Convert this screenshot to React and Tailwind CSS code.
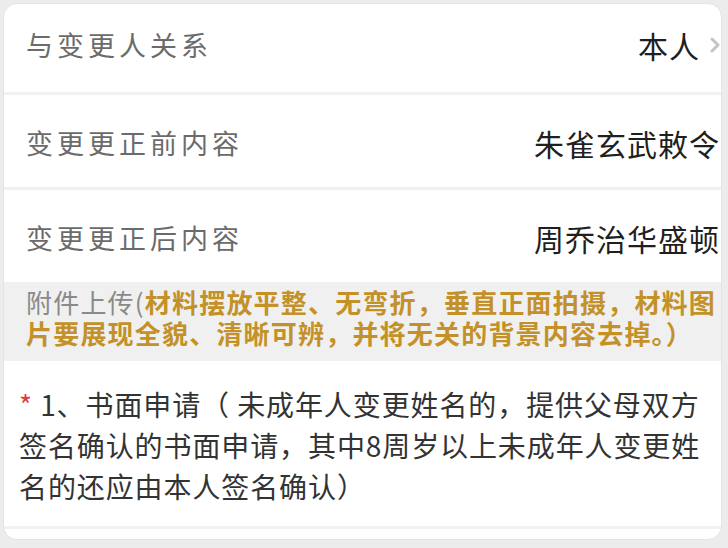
const font = { fontFamily: '"Noto Sans CJK SC", "Noto Sans", sans-serif' };

const Chevron = () => (
  <svg viewBox="0 0 10 16" className="ml-[10px] h-[16px] w-[10px]" fill="none">
    <path d="M2 2l6 6-6 6" stroke="#c4c4c4" strokeWidth="3" strokeLinecap="round" strokeLinejoin="round" />
  </svg>
);

const Row = ({ label, value, arrow, h, pad }) => (
  <div className={`flex items-center justify-between pl-[22px] pr-[1px] ${h} ${pad}`}>
    <span className="text-[27px] tracking-[4px] text-[#6b6b6b]">{label}</span>
    <span className="flex items-center text-[30px] tracking-[1px] text-[#1f1f1f]">
      {value}
      {arrow && <Chevron />}
    </span>
  </div>
);

const Divider = () => <div className="h-[3px] bg-[#f1f1f1]" />;

export default function App() {
  return (
    <div className="min-h-[548px] w-[728px] bg-[#ececec] px-[3px] pt-[3px]" style={font}>
      <div className="w-[719px] overflow-hidden rounded-[14px] border border-[#e4e4e4] bg-white">
        <Row label="与变更人关系" value="本人" arrow h="h-[88px]" pad="pb-[6px]" />
        <Divider />
        <Row label="变更更正前内容" value="朱雀玄武敕令" h="h-[92px]" pad="pt-[4px]" />
        <Divider />
        <Row label="变更更正后内容" value="周乔治华盛顿" h="h-[92px]" pad="pt-[4px]" />

        {/* upload tip */}
        <div className="h-[79px] bg-[#f0f0f0] pl-[22px] pt-[4px] text-[26px] leading-[31px] tracking-[1.2px]">
          <div className="whitespace-nowrap">
            <span className="text-[#8a8a8a]">附件上传(</span>
            <span className="font-semibold text-[#c39128]">材料摆放平整、无弯折，垂直正面拍摄，材料图</span>
          </div>
          <div className="whitespace-nowrap font-semibold text-[#c39128]">
            片要展现全貌、清晰可辨，并将无关的背景内容去掉。）
          </div>
        </div>

        <div className="h-[165px] pl-[15px] pt-[23px] text-[28px] leading-[41px] tracking-[0.9px] text-[#333]">
          <div className="whitespace-nowrap">
            <span className="text-[#e23b3b]">*</span> 1、书面申请（ 未成年人变更姓名的，提供父母双方
          </div>
          <div className="whitespace-nowrap">签名确认的书面申请，其中8周岁以上未成年人变更姓</div>
          <div className="whitespace-nowrap">名的还应由本人签名确认）</div>
        </div>
        <Divider />
        <div className="h-[10px]" />
      </div>
    </div>
  );
}
